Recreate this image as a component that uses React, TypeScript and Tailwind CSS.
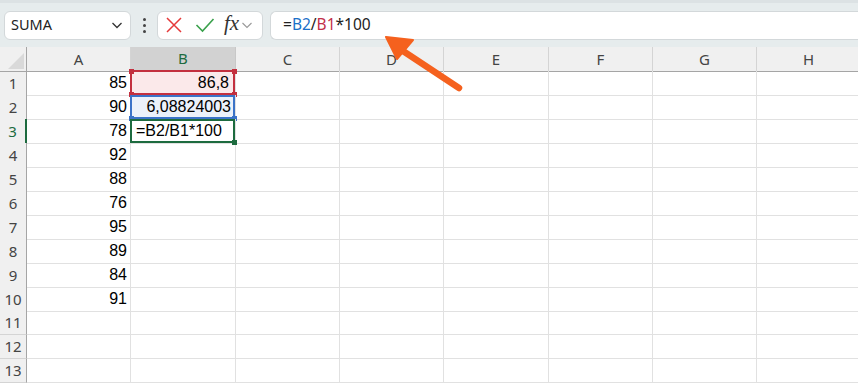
import React from "react";

const COLS = ["A", "B", "C", "D", "E", "F", "G", "H"];
const AVALS: (number | null)[] = [85, 90, 78, 92, 88, 76, 95, 89, 84, 91, null, null, null];

function Corner({ cls, pos }: { cls: string; pos: string }) {
  return <div className={`absolute w-[5px] h-[5px] ${cls} ${pos}`} />;
}

export default function App() {
  return (
    <div className="relative w-[858px] h-[383px] overflow-hidden bg-white" style={{ fontFamily: '"Liberation Sans", Arial, sans-serif' }}>
      {/* toolbar */}
      <div className="h-[47px] bg-[#e6eced] border-t-[3px] border-[#dce2e4] flex items-center pl-1 gap-0" style={{ fontFamily: '"Noto Sans", "Open Sans", sans-serif' }}>
        <div className="w-[127px] h-[29px] bg-white border border-[#d3d8da] rounded-md flex items-center justify-between pl-[6px] pr-[6px]">
          <span className="text-[14.5px] text-[#222]">SUMA</span>
          <svg width="14" height="14" viewBox="0 0 14 14"><path d="M2.5 5 L7 9.5 L11.5 5" fill="none" stroke="#333" strokeWidth="1.3" /></svg>
        </div>
        <div className="w-[26px] flex flex-col items-center justify-center gap-[3px]">
          <div className="w-[3px] h-[3px] bg-[#444] rounded-full" />
          <div className="w-[3px] h-[3px] bg-[#444] rounded-full" />
          <div className="w-[3px] h-[3px] bg-[#444] rounded-full" />
        </div>
        <div className="w-[106px] h-[29px] bg-white border border-[#d3d8da] rounded-md flex items-center pl-[7px]">
          <svg width="18" height="18" viewBox="0 0 18 18"><path d="M2 2 L16 16 M16 2 L2 16" stroke="#e5393a" strokeWidth="1.5" fill="none" /></svg>
          <div className="w-[12px]" />
          <svg width="20" height="18" viewBox="0 0 20 18"><path d="M1.5 9 L7.5 15 L18.5 3" stroke="#3aa14c" strokeWidth="1.6" fill="none" /></svg>
          <div className="w-[9px]" />
          <span className="text-[21px] italic font-medium text-[#333] leading-none mt-[-3px]" style={{ fontFamily: '"Liberation Serif", "Times New Roman", serif' }}>fx</span>
          <svg className="ml-[2px]" width="12" height="12" viewBox="0 0 12 12"><path d="M1.5 4 L6 8.5 L10.5 4" fill="none" stroke="#999" strokeWidth="1.1" /></svg>
        </div>
        <div className="ml-[7px] flex-1 h-[29px] bg-white border border-[#d3d8da] border-r-0 rounded-l-md flex items-center pl-[12px]">
          <span className="text-[15.5px] text-[#222]">
            =<span className="text-[#1b6fc8]">B2</span>/<span className="text-[#c2304a]">B1</span>*100
          </span>
        </div>
      </div>

      {/* header row */}
      <div className="grid grid-cols-[27px_104px_105px_104px_104px_105px_104px_104px_104px] h-[24px]" style={{ fontFamily: '"Noto Sans", "Open Sans", sans-serif' }}>
        <div className="relative bg-[#f0f0f0] border-r border-b border-[#a5a5a5]">
          <svg className="absolute right-[2px] bottom-[2px]" width="16" height="16" viewBox="0 0 16 16"><path d="M16 0 L16 16 L0 16 Z" fill="#d9d9d9" /></svg>
        </div>
        {COLS.map((c) => (
          <div
            key={c}
            className={
              c === "B"
                ? "bg-[#d2d2d2] border-r border-[#c8c8c8] border-b-2 border-b-[#1d6b3f] flex items-center justify-center text-[15px] text-[#1d6b3f]"
                : "bg-[#f0f0f0] border-r border-[#d4d4d4] border-b border-b-[#a5a5a5] flex items-center justify-center text-[15px] text-[#444]"
            }
          >
            {c}
          </div>
        ))}
      </div>

      {/* rows */}
      {AVALS.map((v, i) => {
        const r = i + 1;
        return (
          <div key={r} className="grid grid-cols-[27px_104px_105px_104px_104px_105px_104px_104px_104px] h-[24px]">
            <div
              className={
                r === 3
                  ? "bg-[#f0f0f0] border-r-2 border-r-[#1d6b3f] border-b border-b-[#d4d4d4] flex items-center justify-center text-[15px] text-[#1d6b3f]"
                  : "bg-[#f0f0f0] border-r border-r-[#a5a5a5] border-b border-b-[#d4d4d4] flex items-center justify-center text-[15px] text-[#444]"
              }
              style={{ fontFamily: '"Noto Sans", "Open Sans", sans-serif' }}
            >
              {r}
            </div>
            <div className="border-r border-b border-[#e1e1e1] flex items-center justify-end pr-[3px] text-[16px] text-black">
              {v ?? ""}
            </div>
            {r === 1 ? (
              <div className="relative bg-[#fbe9ea] border-r border-b border-[#e1e1e1] flex items-center justify-end pr-[6px] text-[16px] text-black">
                86,8
                <div className="absolute -left-[1px] -top-[1px] right-0 bottom-0 border-2 border-[#c3303f]" />
                <Corner cls="bg-[#c3303f]" pos="-left-[2px] -top-[2px]" />
                <Corner cls="bg-[#c3303f]" pos="-right-[2px] -top-[2px]" />
                <Corner cls="bg-[#c3303f]" pos="-left-[2px] -bottom-[2px]" />
                <Corner cls="bg-[#c3303f]" pos="-right-[2px] -bottom-[2px]" />
              </div>
            ) : r === 2 ? (
              <div className="relative bg-[#ebf1fa] border-r border-b border-[#e1e1e1] flex items-center justify-end pr-[4px] text-[16px] text-black">
                6,08824003
                <div className="absolute -left-[1px] top-[0px] right-0 bottom-0 border-2 border-[#3b73c8]" />
                <Corner cls="bg-[#3b73c8]" pos="-left-[2px] -bottom-[2px]" />
                <Corner cls="bg-[#3b73c8]" pos="-right-[2px] -bottom-[2px]" />
              </div>
            ) : r === 3 ? (
              <div className="relative border-r border-b border-[#e1e1e1] flex items-center pl-[5px] text-[16px] text-black">
                =B2/B1*100
                <div className="absolute -left-[1px] top-[0px] right-0 bottom-0 border-2 border-[#1d6b3f]" />
                <Corner cls="bg-[#1d6b3f]" pos="-right-[2px] -bottom-[2px]" />
              </div>
            ) : (
              <div className="border-r border-b border-[#e1e1e1]" />
            )}
            {COLS.slice(2).map((c) => (
              <div key={c} className="border-r border-b border-[#e1e1e1]" />
            ))}
          </div>
        );
      })}

      {/* arrow annotation */}
      <svg className="absolute left-0 top-0 pointer-events-none" width="858" height="383" viewBox="0 0 858 383">
        <line x1="459" y1="88" x2="400" y2="49" stroke="#f5611e" strokeWidth="6.5" strokeLinecap="round" />
        <polygon points="386,37 413,40 397,59" fill="#f5611e" stroke="#f5611e" strokeWidth="2" strokeLinejoin="round" />
      </svg>
    </div>
  );
}
